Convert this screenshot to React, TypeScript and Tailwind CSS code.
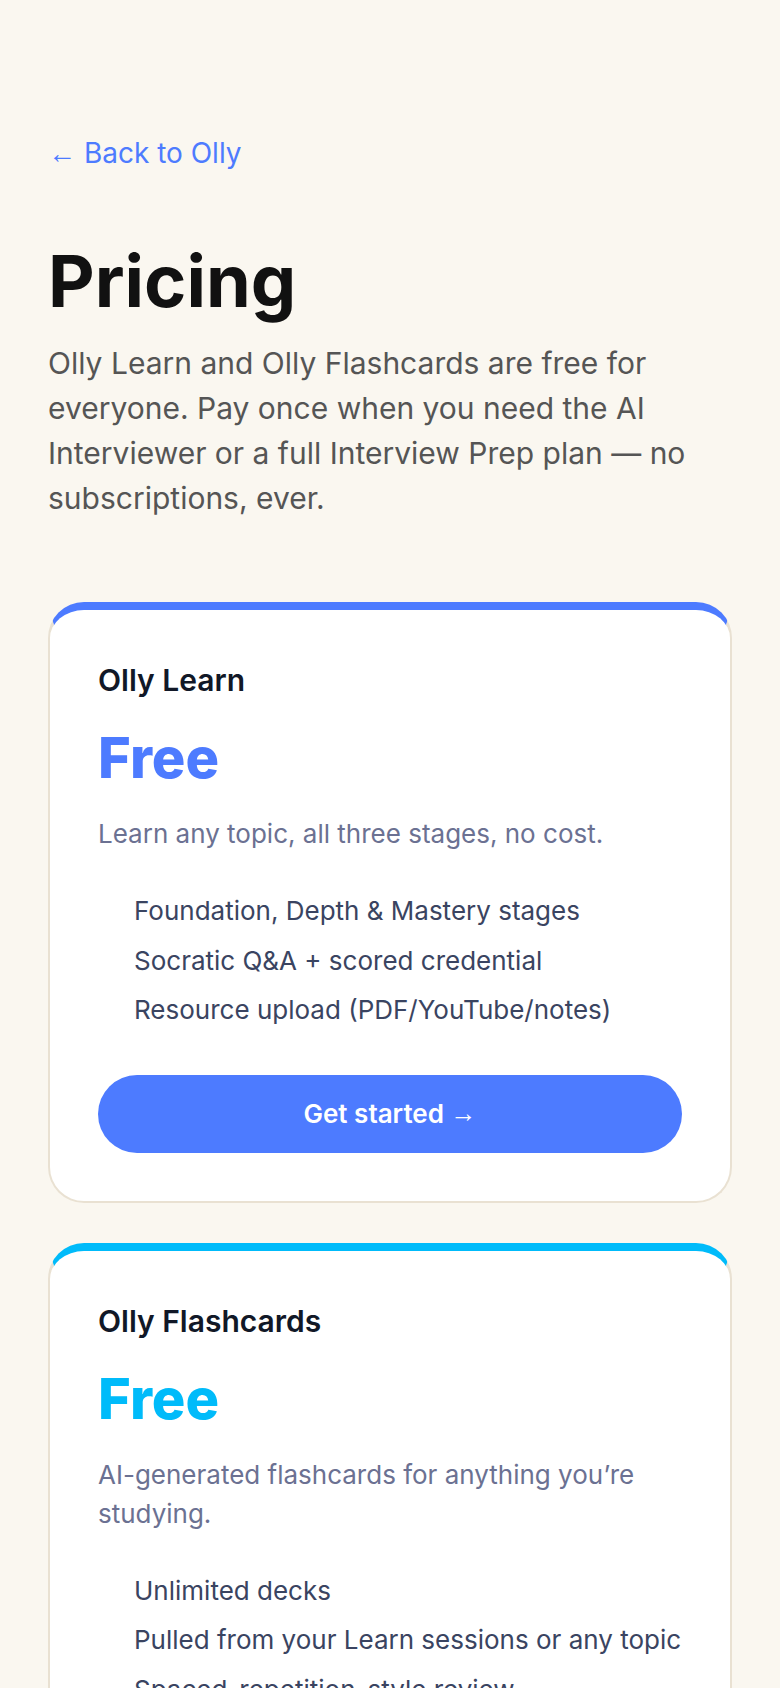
const font = { fontFamily: 'Inter, "Noto Sans", sans-serif' };

interface Plan {
  name: string;
  price: string;
  blurb: string;
  features: string[];
  accent: 'blue' | 'cyan';
}

const plans: Plan[] = [
  {
    name: 'Olly Learn',
    price: 'Free',
    blurb: 'Learn any topic, all three stages, no cost.',
    features: [
      'Foundation, Depth & Mastery stages',
      'Socratic Q&A + scored credential',
      'Resource upload (PDF/YouTube/notes)',
    ],
    accent: 'blue',
  },
  {
    name: 'Olly Flashcards',
    price: 'Free',
    blurb: 'AI-generated flashcards for anything you’re studying.',
    features: [
      'Unlimited decks',
      'Pulled from your Learn sessions or any topic',
      'Spaced-repetition-style review',
    ],
    accent: 'cyan',
  },
];

// arrows in the reference come from a fallback face, thinner than Inter's
function Arrow({ dir }: Readonly<{ dir: 'left' | 'right' }>) {
  return (
    <span className="font-normal" style={{ fontFamily: '"Liberation Sans", sans-serif' }}>
      {dir === 'left' ? '←' : '→'}
    </span>
  );
}

function PlanCard({ plan }: Readonly<{ plan: Plan }>) {
  const blue = plan.accent === 'blue';
  return (
    <div
      className={`rounded-[36px] border-2 border-t-8 border-[#e9e1d2] bg-white px-12 pb-12 pt-12 ${
        blue ? 'border-t-[#4d7bff]' : 'border-t-[#00bbfa]'
      }`}
    >
      <h3 className="text-[30px] font-semibold leading-[1.5] text-[#111827]">{plan.name}</h3>
      <div
        className={`mt-[27px] text-[56px] font-extrabold leading-none ${
          blue ? 'text-[#4d7bff]' : 'text-[#00bbfa]'
        }`}
      >
        {plan.price}
      </div>
      <p className="mt-[28px] text-[26px] leading-[1.5] text-[#6b7192]">{plan.blurb}</p>
      <ul className="mt-[37px] space-y-2 pl-9">
        {plan.features.map((f) => (
          <li key={f} className="text-[26px] leading-[1.6] text-[#3a4461]">
            {f}
          </li>
        ))}
      </ul>
      <button
        className={`mt-11 flex h-[78px] w-full items-center justify-center rounded-full text-[26px] font-semibold text-white ${
          blue ? 'bg-[#4d7bff]' : 'bg-[#00bbfa]'
        }`}
      >
        Get started&nbsp;<Arrow dir="right" />
      </button>
    </div>
  );
}

export default function App() {
  return (
    <div style={font} className="min-h-screen bg-[#faf7f0] px-12 pb-24 pt-[132px]">
      <a href="#" className="text-[28px] leading-[1.5] text-[#4d7bff]">
        <Arrow dir="left" /> Back to Olly
      </a>
      <h1 className="mt-[70px] text-[72px] font-bold leading-none text-[#111111]">Pricing</h1>
      <p className="mt-6 text-[30px] leading-[1.5] text-[#555555]">
        Olly Learn and Olly Flashcards are free for everyone. Pay once when you need the AI
        Interviewer or a full Interview Prep plan — no subscriptions, ever.
      </p>
      <div className="mt-[81px] flex flex-col gap-10">
        {plans.map((p) => (
          <PlanCard key={p.name} plan={p} />
        ))}
      </div>
    </div>
  );
}
